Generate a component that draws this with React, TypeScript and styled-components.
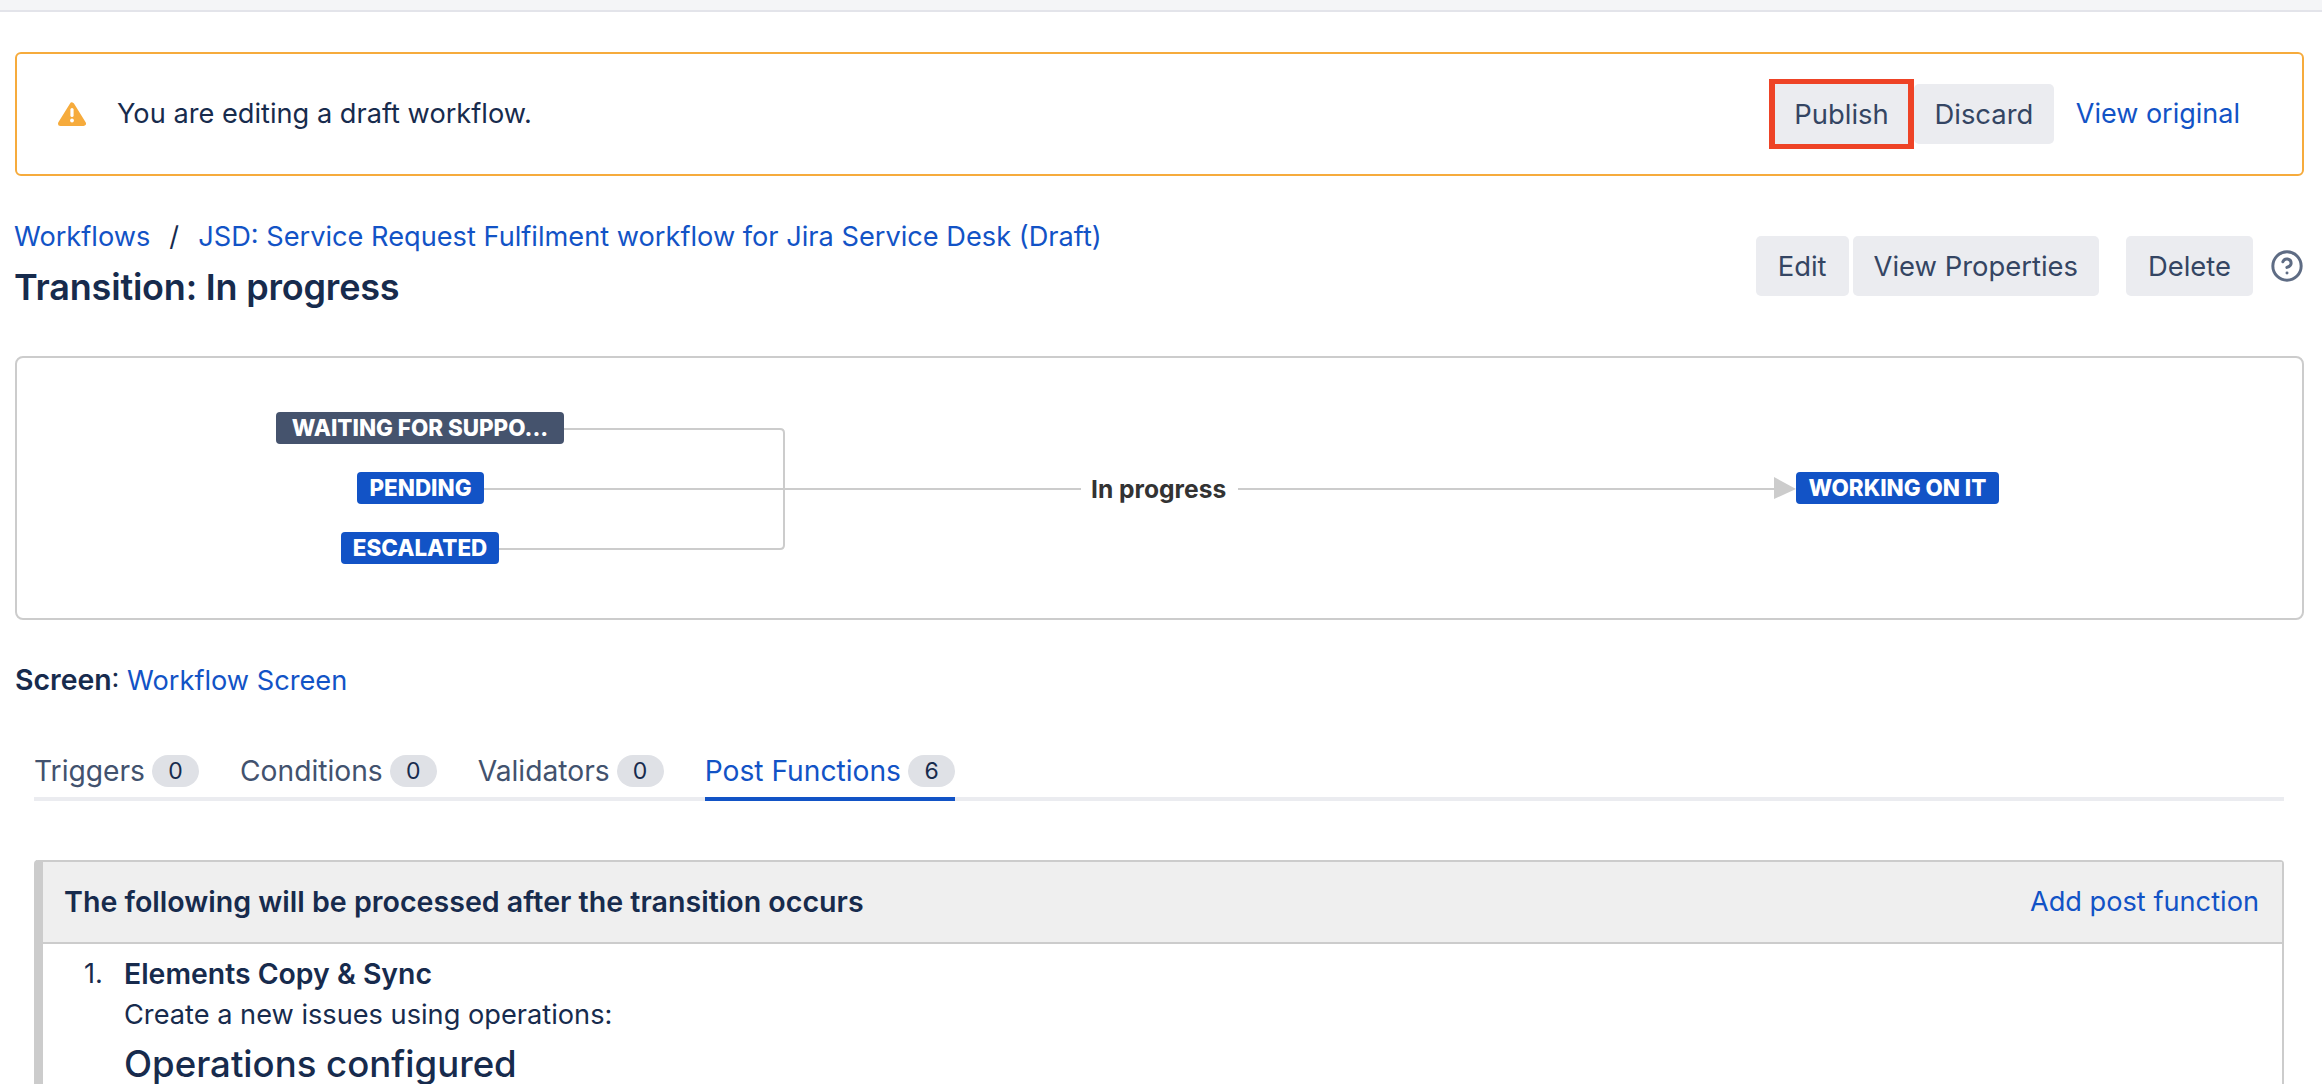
import React from 'react'
import styled, { createGlobalStyle } from 'styled-components'
import { CircleHelp } from 'lucide-react'

const GlobalStyle = createGlobalStyle`
  html, body {
    margin: 0;
    height: 100%;
    overflow: hidden;
    background: #fff;
    font-family: Inter, "Noto Sans", sans-serif;
    color: #172b4d;
  }
`

const LINK = '#1253c6'
const LINE = '#cccccc'

const TopBar = styled.div`
  height: 10px;
  background: #f4f5f7;
  border-bottom: 2px solid #e3e4ea;
`

const Page = styled.div`
  padding: 40px 18px 0 15px;
  font-size: 27.2px;
  line-height: 40px;
`

const Link = styled.a`
  color: ${LINK};
  text-decoration: none;
  white-space: nowrap;
`

const Banner = styled.div`
  height: 124px;
  box-sizing: border-box;
  border: 2px solid #f6ab3c;
  border-radius: 6px;
  display: flex;
  align-items: center;
  padding: 0 62px 0 41px;
`

const BannerText = styled.span`
  margin-left: 31px;
  flex: 1;
`

const Button = styled.button<{ $pad?: number }>`
  height: 60px;
  border: 0;
  border-radius: 5px;
  background: #ebecf0;
  color: #344563;
  font: inherit;
  font-size: 27.4px;
  padding: 0 ${p => p.$pad ?? 21}px;
  white-space: nowrap;
`

const Highlight = styled.div`
  width: 145px;
  height: 70px;
  box-sizing: border-box;
  border: solid #ee4326;
  border-width: 5px 6px;
  background: #ebecf0;
  color: #344563;
  font-size: 27.4px;
  display: flex;
  align-items: center;
  justify-content: center;
`

const DiscardLink = styled(Link)`
  margin-left: 22px;
  font-size: 27px;
`

const Header = styled.div`
  display: flex;
  justify-content: space-between;
  margin-top: 41px;
  height: 139px;
`

const Crumbs = styled.div`
  display: flex;
  gap: 19px;
  margin-left: -1px;
  color: #172b4d;
`

const Title = styled.h1`
  margin: 10px 0 0 -1px;
  font-size: 36px;
  line-height: 40px;
  font-weight: 600;
  letter-spacing: -0.2px;
`

const HeaderActions = styled.div`
  display: flex;
  align-items: center;
  height: 60px;
  margin-top: 19px;
`

const EditButton = styled(Button)`
  margin-right: 4px;
`

const DeleteButton = styled(Button)`
  margin-left: 27px;
`

const HelpIcon = styled(CircleHelp)`
  margin-left: 17px;
  color: #5e6c84;
`

const Diagram = styled.div`
  position: relative;
  height: 264px;
  box-sizing: border-box;
  border: 2px solid ${LINE};
  border-radius: 8px;
`

const Wires = styled.svg`
  position: absolute;
  left: -2px;
  top: -2px;
`

const Status = styled.div<{ $left: number; $top: number; $width: number; $dark?: boolean }>`
  position: absolute;
  left: ${p => p.$left}px;
  top: ${p => p.$top}px;
  width: ${p => p.$width}px;
  height: 32px;
  border-radius: 4px;
  background: ${p => (p.$dark ? '#45536d' : LINK)};
  color: #fff;
  font-size: 22.4px;
  font-weight: 800;
  line-height: 32px;
  text-align: center;
  white-space: nowrap;
`

const TransitionName = styled.div`
  position: absolute;
  left: 1074px;
  top: 113px;
  font-size: 24.6px;
  font-weight: 700;
  line-height: 36px;
  color: #333;
`

const ScreenRow = styled.div`
  margin-top: 40px;
  height: 40px;
`

const ScreenLabel = styled.span`
  font-size: 28.4px;
  font-weight: 600;
`

const Tabs = styled.div`
  display: flex;
  margin: 44px 20px 0 19px;
  height: 53px;
  border-bottom: 4px solid #ebecf0;
  gap: 41px;
`

const Tab = styled.div<{ $active?: boolean }>`
  display: flex;
  gap: 7px;
  height: 57px;
  box-sizing: border-box;
  padding-top: 7px;
  font-size: 28.2px;
  color: ${p => (p.$active ? LINK : '#42526e')};
  border-bottom: 4px solid ${p => (p.$active ? LINK : 'transparent')};
  white-space: nowrap;
`

const Count = styled.span`
  width: 47px;
  height: 32px;
  margin-top: 4px;
  border-radius: 16px;
  background: #dfe1e6;
  color: #172b4d;
  font-size: 23px;
  line-height: 32px;
  text-align: center;
`

const Panel = styled.div`
  margin: 59px 20px 0 19px;
  height: 400px;
  box-sizing: border-box;
  border: solid ${LINE};
  border-width: 2px 2px 0 9px;
  border-radius: 4px 4px 0 0;
`

const PanelHead = styled.div`
  height: 82px;
  box-sizing: border-box;
  background: #efefef;
  border-bottom: 2px solid ${LINE};
  display: flex;
  align-items: center;
  justify-content: space-between;
  padding: 0 23px 0 21px;
  font-size: 28.6px;
  font-weight: 600;
`

const AddLink = styled(Link)`
  font-size: 27.2px;
  font-weight: 400;
`

const FunctionList = styled.ol`
  margin: 10px 0 0;
  padding: 0 0 0 41px;
  list-style: none;
`

const FunctionItem = styled.li`
  display: flex;
`

const Marker = styled.span`
  width: 40px;
  flex: none;
`

const FunctionName = styled.div`
  font-size: 28.4px;
  font-weight: 600;
`

const FunctionText = styled.div`
  margin-top: 1px;
`

const OperationsHeading = styled.h2`
  margin: 4px 0 0;
  font-size: 36.6px;
  line-height: 50px;
  font-weight: 500;
`

const BottomFade = styled.div`
  position: fixed;
  left: 0;
  right: 0;
  bottom: 0;
  height: 64px;
  z-index: -1;
  background: linear-gradient(to bottom, rgba(238, 238, 238, 0), rgba(238, 238, 238, 0.9));
`

const WarningIcon = () => (
  <svg width="28" height="24" viewBox="0 0 28 24">
    <polygon points="14,3 25.5,21.5 2.5,21.5" fill="#f6ab3c" stroke="#f6ab3c" strokeWidth="5" strokeLinejoin="round" />
    <rect x="12.4" y="6" width="3.2" height="9" rx="1.6" fill="#fff" />
    <circle cx="14" cy="18.5" r="1.9" fill="#fff" />
  </svg>
)

export default function App() {
  return (
    <>
      <GlobalStyle />
      <TopBar />
      <Page>
        <Banner>
          <WarningIcon />
          <BannerText>You are editing a draft workflow.</BannerText>
          <Highlight>Publish</Highlight>
          <Button $pad={20.5}>Discard</Button>
          <DiscardLink>View original</DiscardLink>
        </Banner>

        <Header>
          <div>
            <Crumbs>
              <Link>Workflows</Link>
              <span>/</span>
              <Link>JSD: Service Request Fulfilment workflow for Jira Service Desk (Draft)</Link>
            </Crumbs>
            <Title>Transition: In progress</Title>
          </div>
          <HeaderActions>
            <EditButton $pad={22}>Edit</EditButton>
            <Button>View Properties</Button>
            <DeleteButton $pad={22}>Delete</DeleteButton>
            <HelpIcon size={34} strokeWidth={2.1} />
          </HeaderActions>
        </Header>

        <Diagram>
          <Wires width="2289" height="264" fill="none" stroke={LINE} strokeWidth="2">
            <path d="M549 73 H765 Q769 73 769 77 V189 Q769 193 765 193 H484" />
            <path d="M469 133 H1066" />
            <path d="M1223 133 H1760" />
            <polygon points="1759,121 1781,133 1759,143" fill={LINE} stroke="none" />
          </Wires>
          <Status $dark $left={259} $top={54} $width={288}>WAITING FOR SUPPO...</Status>
          <Status $left={340} $top={114} $width={127}>PENDING</Status>
          <Status $left={324} $top={174} $width={158}>ESCALATED</Status>
          <TransitionName>In progress</TransitionName>
          <Status $left={1779} $top={114} $width={203}>WORKING ON IT</Status>
        </Diagram>

        <ScreenRow>
          <ScreenLabel>Screen</ScreenLabel>: <Link>Workflow Screen</Link>
        </ScreenRow>

        <Tabs>
          <Tab>Triggers<Count>0</Count></Tab>
          <Tab>Conditions<Count>0</Count></Tab>
          <Tab>Validators<Count>0</Count></Tab>
          <Tab $active>Post Functions<Count>6</Count></Tab>
        </Tabs>

        <Panel>
          <PanelHead>
            <span>The following will be processed after the transition occurs</span>
            <AddLink>Add post function</AddLink>
          </PanelHead>
          <FunctionList>
            <FunctionItem>
              <Marker>1.</Marker>
              <div>
                <FunctionName>Elements Copy &amp; Sync</FunctionName>
                <FunctionText>Create a new issues using operations:</FunctionText>
                <OperationsHeading>Operations configured</OperationsHeading>
              </div>
            </FunctionItem>
          </FunctionList>
        </Panel>
      </Page>
      <BottomFade />
    </>
  )
}
